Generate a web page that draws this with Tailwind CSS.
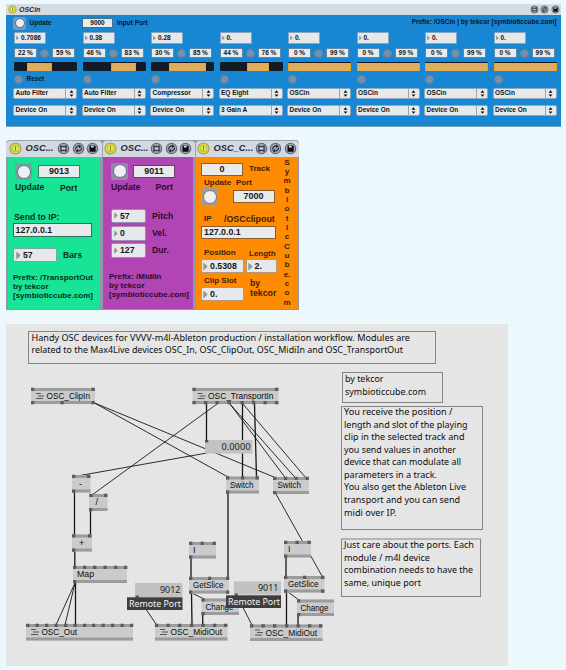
<!DOCTYPE html>
<html lang="en">
<head>
<meta charset="utf-8">
<title>OSC devices</title>
<script src="https://cdn.jsdelivr.net/npm/@tailwindcss/browser@4"></script>
</head>
<body class="bg-[#ecf8fb]">
<svg width="0" height="0" class="absolute">
  <symbol id="power" viewBox="0 0 14 14"><circle cx="7" cy="7" r="6" fill="#dde04a" stroke="#98a238" stroke-width="1.1"/><circle cx="7" cy="7" r="3.7" fill="#e6e964" stroke="#a3a93c" stroke-width=".8"/><path d="M7 4.6v4.8" stroke="#7d8430" stroke-width="1.2"/></symbol>
  <symbol id="map" viewBox="0 0 14 14"><circle cx="7" cy="7" r="5.7" fill="#9ca3b0" stroke="#5c626e" stroke-width="1.1"/><rect x="4.300" y="5.100" width="5.400" height="3.800" fill="#c9ced8" stroke="#1d2026" stroke-width="1.1"/><path d="M4.300 3.600v1.500M9.700 3.600v1.500M4.300 8.900v1.500M9.700 8.900v1.500" stroke="#1d2026" stroke-width="1.1"/></symbol>
  <symbol id="swap" viewBox="0 0 14 14"><circle cx="7" cy="7" r="5.7" fill="#9ca3b0" stroke="#5c626e" stroke-width="1.1"/><path d="M3.800 8a3.200 3.200 0 0 1 4-3.500M10.200 6a3.200 3.200 0 0 1-4 3.500" fill="none" stroke="#1d2026" stroke-width="1.1"/><path d="M7.400 2.800l3 1.800-2.700 1.900zM6.600 11.200l-3-1.800 2.700-1.900z" fill="#1d2026"/></symbol>
  <symbol id="save" viewBox="0 0 14 14"><circle cx="7" cy="7" r="5.7" fill="#9ca3b0" stroke="#5c626e" stroke-width="1.1"/><path d="M3.800 3.800h5.600l1 1v5.600h-6.600z" fill="#0c0d10"/><path d="M5.300 4h3v1.900h-3z" fill="#d9dde4"/></symbol>
  <symbol id="tri" viewBox="0 0 5 8"><path d="M.3 0L4.700 4L.3 8z" fill="#8d949d"/></symbol>
  <symbol id="updown" viewBox="0 0 5 8"><path d="M2.500 .3L4.700 3H.3zM2.500 7.700L.3 5h4.400z" fill="#0b0b0b"/></symbol>
</svg>

<main class="w-[566px] h-[670px] overflow-hidden pt-[4px] pl-[6px] font-['Liberation_Sans',Arial,sans-serif] font-bold text-[#0d1522]">

  <!-- OSCin device -->
  <section class="w-[554.500px] h-[123px] bg-[#1787d3] border-b border-[#7ca3b9] text-[6.5px] leading-none">
    <header class="flex items-center h-[11px] bg-[#d6dae1] pl-[1.5px] pr-[1px]">
      <svg class="w-[9px] h-[9px]"><use href="#power"/></svg>
      <h1 class="ml-[2.5px] italic text-[7px] grow text-[#222a36]">OSCin</h1>
      <svg class="w-[9px] h-[9px] mr-[1.300px]"><use href="#map"/></svg>
      <svg class="w-[9px] h-[9px] mr-[1.300px]"><use href="#swap"/></svg>
      <svg class="w-[9px] h-[9px]"><use href="#save"/></svg>
    </header>
    <div class="flex h-[16px] items-center pl-[7px] pr-[4px]">
      <div class="w-[13px] h-[13px] rounded-[2px] bg-[#7d98b4] p-[1.500px]"><div class="w-[10px] h-[10px] rounded-full bg-[#eef0f4] border border-[#53708f]"></div></div>
      <span class="w-[56px] pl-[3.500px]">Update</span>
      <span class="w-[31px] h-[9.500px] bg-[#e9eaeb] border border-[#4e6b84] flex items-center justify-center">9000</span>
      <span class="pl-[4px] grow">Input Port</span>
      <span class="pb-[1.500px]">Prefix: /OSCin | by tekcor [symbioticcube.com]</span>
    </div>
    <div id="channels" class="flex gap-[5.500px] pl-[8px] pt-[1px]"></div>
  </section>

  <div class="flex mt-[13px] w-[293px] h-[170px] bg-[#8f97a8] rounded-t-[4px] overflow-hidden text-[8.700px] leading-none">
    <!-- TransportOut -->
    <section class="w-[95.500px]">
      <header class="flex items-center h-[16.500px] bg-[#d3d8e2] rounded-t-[4px] border-t border-[#9aa1b0] pl-[3px] pr-[2.500px]">
        <svg class="w-[13px] h-[13px]"><use href="#power"/></svg>
        <h2 class="ml-[3.500px] italic text-[9.300px] grow text-[#222a36] pb-px">OSC...</h2>
        <svg class="w-[13px] h-[13px] mr-[1.300px]"><use href="#map"/></svg>
        <svg class="w-[13px] h-[13px] mr-[1.300px]"><use href="#swap"/></svg>
        <svg class="w-[13px] h-[13px]"><use href="#save"/></svg>
      </header>
      <div class="ml-[2px] mr-[1.500px] h-[152px] bg-[#17e496] pt-[6.500px] text-[#07301f]">
        <div class="flex items-center pl-[7px] gap-[6px]">
          <div class="w-[17px] h-[17px] rounded-[2px] bg-[#77a39d] p-[1.500px]"><div class="w-[14px] h-[14px] rounded-full bg-[#ecf1f3] border-[1.500px] border-[#66748a]"></div></div>
          <span class="w-[42px] h-[13px] bg-[#e9eaeb] border border-[#3c7f66] flex items-center justify-center text-[9px] text-[#15181c]">9013</span>
        </div>
        <div class="flex pl-[7px] mt-[3px]"><span class="w-[45px]">Update</span><span class="pt-[.5px]">Port</span></div>
        <div class="pl-[6px] mt-[20.500px]">Send to IP:</div>
        <div class="ml-[4.500px] mt-[2px] w-[79.500px] h-[13.500px] bg-[#e9eaeb] border border-[#2d6f58] flex items-center pl-[2px] text-[8.800px] text-[#15181c]">127.0.0.1</div>
        <div class="flex items-center mt-[11px] pl-[5px]">
          <span class="w-[44px] h-[14.500px] rounded-[2px] bg-[#e6e8ea] border-[1.500px] border-[#7fa6a0] flex items-center pl-[1.500px] gap-[2.500px] text-[#15181c]"><svg class="w-[5px] h-[9px]"><use href="#tri"/></svg>57</span>
          <span class="pl-[6px]">Bars</span>
        </div>
        <p class="pl-[5px] mt-[10.500px] text-[8px] leading-[9.100px]">Prefix: /TransportOut<br>by tekcor<br>[symbioticcube.com]</p>
      </div>
    </section>
    <!-- MidiIn -->
    <section class="w-[93px]">
      <header class="flex items-center h-[16.500px] bg-[#d3d8e2] rounded-t-[4px] border-t border-l border-[#9aa1b0] pl-[1px] pr-[2.500px]">
        <svg class="w-[13px] h-[13px]"><use href="#power"/></svg>
        <h2 class="ml-[4px] italic text-[9.300px] grow text-[#222a36] pb-px">OSC...</h2>
        <svg class="w-[13px] h-[13px] mr-[1.300px]"><use href="#map"/></svg>
        <svg class="w-[13px] h-[13px] mr-[1.300px]"><use href="#swap"/></svg>
        <svg class="w-[13px] h-[13px]"><use href="#save"/></svg>
      </header>
      <div class="ml-[1.500px] mr-[2px] h-[152px] bg-[#b045b3] pt-[6px] text-[#2c0b32]">
        <div class="flex items-center pl-[8px] gap-[5px]">
          <div class="w-[17px] h-[17px] rounded-[2px] bg-[#9887ac] p-[1.500px]"><div class="w-[14px] h-[14px] rounded-full bg-[#f0eff4] border-[1.500px] border-[#6c6a8c]"></div></div>
          <span class="w-[42px] h-[13px] bg-[#e9eaeb] border border-[#6d3a72] flex items-center justify-center text-[9px] text-[#15181c]">9011</span>
        </div>
        <div class="flex pl-[8px] mt-[3px]"><span class="w-[44.500px]">Update</span><span class="pt-[.5px]">Port</span></div>
        <div class="flex flex-col gap-[2.800px] mt-[17px] pl-[8px]">
          <div class="flex items-center gap-[6px]"><span class="w-[35px] h-[14.500px] rounded-[2px] bg-[#e6e8ea] border-[1.500px] border-[#a08bb4] flex items-center pl-[1.500px] gap-[2.500px] text-[#15181c]"><svg class="w-[4px] h-[7px]"><use href="#tri"/></svg>57</span>Pitch</div>
          <div class="flex items-center gap-[6px]"><span class="w-[35px] h-[14.500px] rounded-[2px] bg-[#e6e8ea] border-[1.500px] border-[#a08bb4] flex items-center pl-[1.500px] gap-[2.500px] text-[#15181c]"><svg class="w-[4px] h-[7px]"><use href="#tri"/></svg>0</span>Vel.</div>
          <div class="flex items-center gap-[6px]"><span class="w-[35px] h-[14.500px] rounded-[2px] bg-[#e6e8ea] border-[1.500px] border-[#a08bb4] flex items-center pl-[1.500px] gap-[2.500px] text-[#15181c]"><svg class="w-[4px] h-[7px]"><use href="#tri"/></svg>127</span>Dur.</div>
        </div>
        <p class="pl-[6px] mt-[14.500px] text-[8px] leading-[9.100px]">Prefix: /MidiIn<br>by tekcor<br>[symbioticcube.com]</p>
      </div>
    </section>
    <!-- ClipOut -->
    <section class="w-[104.500px]">
      <header class="flex items-center h-[16.500px] bg-[#d3d8e2] rounded-t-[4px] border-t border-l border-[#9aa1b0] pl-[1px] pr-[2.500px]">
        <svg class="w-[13px] h-[13px]"><use href="#power"/></svg>
        <h2 class="ml-[4px] italic text-[9.300px] grow text-[#222a36] pb-px">OSC_C...</h2>
        <svg class="w-[13px] h-[13px] mr-[1.300px]"><use href="#map"/></svg>
        <svg class="w-[13px] h-[13px] mr-[1.300px]"><use href="#swap"/></svg>
        <svg class="w-[13px] h-[13px]"><use href="#save"/></svg>
      </header>
      <div class="ml-[1.500px] mr-[1px] h-[152px] bg-[#ff8b03] flex text-[#3d2207]">
        <div class="w-[82px] pl-[5px] pt-[6px] text-[8px]">
          <div class="flex items-center gap-[6px]"><span class="w-[42px] h-[13px] bg-[#e9eaeb] border border-[#8d5c2a] flex items-center justify-center text-[9px] text-[#15181c]">0</span>Track</div>
          <div class="flex mt-[3.500px] pl-[3px]"><span class="w-[32px]">Update</span>Port</div>
          <div class="flex items-center mt-[1px] gap-[14.500px]">
            <div class="w-[17px] h-[17px] rounded-[2px] bg-[#a59b90] p-[1.500px]"><div class="w-[14px] h-[14px] rounded-full bg-[#f1f0ef] border-[1.500px] border-[#77777c]"></div></div>
            <span class="w-[42px] h-[13px] bg-[#e9eaeb] border border-[#8d5c2a] flex items-center justify-center text-[9px] text-[#15181c]">7000</span>
          </div>
          <div class="flex items-end mt-[9.500px] pl-[3px]"><span class="w-[20px]">IP</span><span class="text-[8.900px]">/OSCclipout</span></div>
          <div class="mt-[2.500px] w-[75px] h-[13.500px] bg-[#e9eaeb] border border-[#8d5c2a] flex items-center pl-[2px] text-[8.800px] text-[#15181c]">127.0.0.1</div>
          <div class="flex mt-[10px] pl-[3px]"><span class="w-[45px]">Position</span><span class="pt-[.5px]">Length</span></div>
          <div class="flex gap-[1.500px] mt-[1px] text-[8.800px] text-[#15181c]">
            <span class="w-[43px] h-[14.500px] rounded-[2px] bg-[#e6e8ea] border-[1.500px] border-[#b09a80] flex items-center pl-[1px] gap-[2px]"><svg class="w-[5px] h-[9px]"><use href="#tri"/></svg>0.5308</span>
            <span class="w-[31px] h-[14.500px] rounded-[2px] bg-[#e6e8ea] border-[1.500px] border-[#b09a80] flex items-center pl-[1px] gap-[2px]"><svg class="w-[5px] h-[9px]"><use href="#tri"/></svg>2.</span>
          </div>
          <div class="flex mt-[4px] gap-[6px]">
            <div class="w-[43px]">
              <div class="pl-[3px]">Clip Slot</div>
              <div class="mt-[1.500px] w-[43px] h-[14.500px] rounded-[2px] bg-[#e6e8ea] border-[1.500px] border-[#b09a80] flex items-center pl-[1px] gap-[2px] text-[8.800px] text-[#15181c]"><svg class="w-[5px] h-[9px]"><use href="#tri"/></svg>0.</div>
            </div>
            <div class="text-[8.800px] leading-[9.800px] pt-[2px]">by<br>tekcor</div>
          </div>
        </div>
        <div class="w-[18px] pt-[1px] text-center text-[8px] leading-[9.350px]">S<br>y<br>m<br>b<br>i<br>o<br>t<br>i<br>c<br>C<br>u<br>b<br>e.<br>c<br>o<br>m</div>
      </div>
    </section>
  </div>

  <!-- Patch canvas: node coordinates are page coordinates via the viewBox -->
  <section class="mt-[14px] w-[502px] h-[342px] bg-[#e5e5e5]">
    <svg id="patch" class="block w-[502px] h-[342px] font-normal" viewBox="6 324 502 342"></svg>
  </section>
</main>

<script>
const channels = [
  ['0.7086', 22, 59, 'Auto Filter', 'Device On', 21, 61],
  ['0.38', 46, 83, 'Auto Filter', 'Device On', 45, 85],
  ['0.28', 30, 85, 'Compressor', 'Device On', 29, 87],
  ['0.', 44, 76, 'EQ Eight', '3 Gain A', 43, 78],
  ['0.', 0, 99, 'OSCin', 'Device On', 0, 100],
  ['0.', 0, 99, 'OSCin', 'Device On', 0, 100],
  ['0.', 0, 99, 'OSCin', 'Device On', 0, 100],
  ['0.', 0, 99, 'OSCin', 'Device On', 0, 100]
];
const dot = '<span class="w-[9px] h-[9px] rounded-full bg-[#7b8fa6] border border-[#5f83a6] shrink-0"></span>';
const pct = v => `<span class="w-[23px] h-[10px] bg-[#e9eaeb] border border-[#5d88ac] flex items-center justify-center">${v} %</span>`;
const menu = t => `<div class="-ml-[1px] w-[64px] h-[11px] rounded-[2px] bg-[#e8e9ea] border border-[#8aa9c2] flex items-center"><span class="w-[51px] pl-[1.500px] whitespace-nowrap">${t}</span><span class="h-full grow border-l border-[#9aa3ab] flex items-center justify-center"><svg class="w-[5px] h-[7px]"><use href="#updown"/></svg></span></div>`;
document.getElementById('channels').innerHTML = channels.map((c, i) => `
  <div class="w-[63px] shrink-0">
    <div class="w-[32px] h-[11.500px] bg-[#e6e8ea] rounded-[1px] border border-[#86a6bf] flex items-center gap-[2px] pl-[1px]"><svg class="w-[3px] h-[6px]"><use href="#tri"/></svg>${c[0]}</div>
    <div class="flex items-center justify-between mt-[4.500px] pr-[2px]">${pct(c[1])}${dot}${pct(c[2])}</div>
    <div class="mt-[4px] h-[9px] bg-[#131c26] rounded-[1px] py-[.5px]"><div class="h-[8px] bg-[#e0ad5c] border-x border-[#e8a020]" style="margin-left:${c[5]}%;width:${c[6] - c[5]}%"></div></div>
    <div class="flex items-center gap-[3.500px] mt-[4px] h-[9px]">${dot}${i ? '' : 'Reset'}</div>
    <div class="mt-[4px]">${menu(c[3])}</div>
    <div class="mt-[5.500px]">${menu(c[4])}</div>
  </div>`).join('');

let out = '';
const rect = (x, y, w, h, f, extra = '') => out += `<rect x="${x}" y="${y}" width="${w}" height="${h}" fill="${f}" ${extra}/>`;
const text = (x, y, len, s, size = 9, fill = '#0c0c0c', fam = 'Liberation Sans, Arial, sans-serif') =>
  out += `<text x="${x}" y="${y}" ${len ? `textLength="${len}" lengthAdjust="spacingAndGlyphs"` : ''} font-size="${size}" fill="${fill}" font-family="${fam}">${s}</text>`;
const wire = (x1, y1, x2, y2, w = 0.9) => out += `<line x1="${x1}" y1="${y1}" x2="${x2}" y2="${y2}" stroke="#161616" stroke-width="${w}"/>`;

[[94.5,403,228,477],[94.5,403,275,477.500],[217,404,92,495],[230,404,285.500,478],[230,404,295.500,478],[243,404,306,478],
 [207,453,77,476],[276,494,322,576],[192,593,204,599],[288,592,299,600],[137,596,156,624],[236,594,252,625],[75,583,56,625],[75,583,65,625]].forEach(a => wire(...a));
[[206.500,404,206.500,441],[242.500,404,242.500,477],[254.500,404,256.500,477],[228,493,228,577],[74.500,492,74.500,535],[90.500,511,90.500,535],
 [74.800,551,74.800,566],[75.500,583,75.500,625],[191,558,191,577],[191.500,593,192,624],[202.700,615,202.700,624],[286,557,286,576],[286.500,592,286.500,625],[298,616,298,625]].forEach(a => wire(...a, 1.3));

// x, y, w, h, label, label x, label length, top pins, bottom pins, subpatch glyph
const nodes = [
  [31,388,64,16,'OSC_ClipIn',46.500,43.500,[31,91.500],[31,60.500,91.500],1],
  [192.500,388,86,16,'OSC_TransportIn',208,65.500,[192.500,275],[192.500,204,215.500,227.500,240.500,252,263.500,275],1],
  [72,475,18.500,17.500,'-',79,0,[72,87],[72]],
  [89,494,18.500,17,'/',95.500,0,[89.500,104],[89]],
  [72,534.500,20,17,'+',79,0,[72,88],[72]],
  [73,566,54,17,'Map',77,17,[73,83,93,103.500,114,124],[73]],
  [26,624,107,16.500,'OSC_Out',41.500,35.500,[26,35.500,45,54.500,64,73.500,83,92,101.500,111,120.500,130],[],1],
  [189,542,27,16.500,'I',193,0,[189,200.500,212.500],[189]],
  [189,577,40,16.500,'GetSlice',193,30.500,[189,208,226],[189,226]],
  [201.500,598.500,37.500,16.500,'Change',205.500,28,[201.500],[201.500]],
  [155,624,72.500,16.500,'OSC_MidiOut',170.500,51.500,[155,166.500,178,190,201.500,213,224],[],1],
  [226,476.500,33,17,'Switch',230,23.500,[226,241,255.500],[226]],
  [273,477,36,17,'Switch',277.500,23.500,[273,284,294.500,305.500],[273]],
  [284,541,27,16.500,'I',288,0,[284,295.500,307.500],[284]],
  [284,576,40.500,16.500,'GetSlice',288,30.500,[284,303,321],[284,321]],
  [297,599.500,37,16.500,'Change',300.500,28,[297],[297]],
  [250,624.500,72.500,16.500,'OSC_MidiOut',265.500,51.500,[250,261.500,273,285,296.500,308,319],[],1]
];
nodes.forEach(([x, y, w, h, label, lx, len, top, bottom, sub]) => {
  rect(x, y, w, h, '#cbcbcb');
  rect(x, y, w, 3, '#9c9c9c');
  rect(x, y + h - 3, w, 3, '#9c9c9c');
  top.forEach(p => rect(p, y - .3, 3.300, 3.300, '#5c5c5c'));
  bottom.forEach(p => rect(p, y + h - 3, 3.300, 3.300, '#5c5c5c'));
  if (sub) out += `<path d="M${x + 5} ${y + 5.500}h5M${x + 7} ${y + 8}h6M${x + 5} ${y + 10.500}h7" stroke="#555" stroke-width="1"/>`;
  text(lx, y + h / 2 + 2.800, len, label);
});
const sans = 'Noto Sans, Open Sans, sans-serif';
rect(205, 440, 47.500, 13.500, '#c2c2c2'); rect(205, 440, 3.300, 2.500, '#555');
text(221.500, 450, 29, '0.0000', 9, '#222', sans);
rect(135, 583, 47.500, 14, '#c2c2c2'); rect(135.500, 595.500, 3.300, 2, '#555'); text(160, 593, 20.500, '9012', 9, '#222', sans);
rect(127, 597.300, 55.500, 12.700, '#3e3e3e'); text(129, 607, 52, 'Remote Port', 8.700, '#f4f4f4', sans);
rect(234, 581.500, 47, 13, '#c2c2c2'); rect(234.500, 593.500, 3.300, 2, '#555'); text(258, 591, 20.500, '9011', 9, '#222', sans);
rect(226, 595.300, 55, 12.700, '#3e3e3e'); text(228, 605, 52, 'Remote Port', 8.700, '#f4f4f4', sans);

const note = (x, y, w, h, tx, ty, lines) => {
  rect(x, y, w, h, 'none', 'stroke="#858585" stroke-width="1"');
  lines.forEach(([s, len], i) => text(tx, ty + i * 12.57, len, s, 8.900, '#0c0c0c', sans));
};
note(28.500, 331.500, 407, 32, 31.500, 340.500, [
  ['Handy OSC devices for VVVV-m4l-Ableton production / installation workflow. Modules are', 378.500],
  ['related to the Max4Live devices OSC_In, OSC_ClipOut, OSC_MidiIn and OSC_TransportOut', 371.500]]);
note(342.500, 372.500, 100, 30, 345, 382, [['by tekcor', 38.500], ['symbioticcube.com', 81]]);
note(341.500, 406.500, 141, 123, 344, 415, [
  ['You receive the position /', 108.500], ['length and slot of the playing', 123.500], ['clip in the selected track and', 120.500],
  ['you send values in another', 112], ['device that can modulate all', 117], ['parameters in a track.', 93],
  ['You also get the Ableton Live', 122], ['transport and you can send', 116], ['midi over IP.', 52.500]]);
note(341.500, 539, 139, 57.500, 344, 548, [
  ['Just care about the ports. Each', 130], ['module / m4l device', 86], ['combination needs to have the', 129], ['same, unique port', 77]]);
document.getElementById('patch').innerHTML = out;
</script>
</body>
</html>
